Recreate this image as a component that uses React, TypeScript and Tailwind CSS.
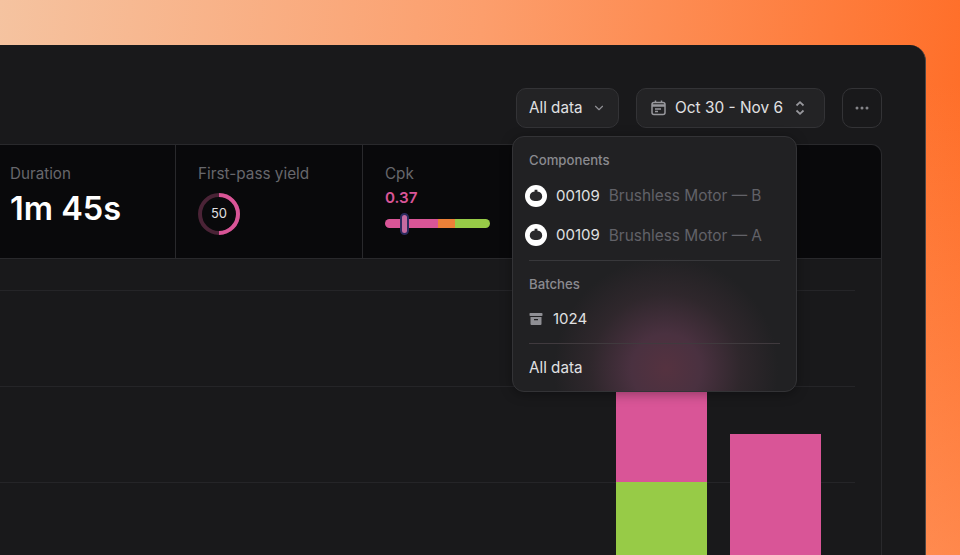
import { ChevronDown } from 'lucide-react'

const gridLines = [31, 127, 223]

function ComponentRow({ code, name }: { code: string; name: string }) {
  return (
    <div className="flex h-[39.5px] items-center pl-[12px]">
      <div className="flex h-[22px] w-[22px] items-center justify-center rounded-full bg-white">
        <svg width="14" height="14" viewBox="0 0 14 14">
          <path d="M5.6 0.8 H8.4 V2.6 C11.4 3 13.2 4.8 13.2 7.4 C13.2 10.4 10.4 12 7 12 C3.6 12 0.8 10.4 0.8 7.4 C0.8 4.8 2.6 3 5.6 2.6 Z" fill="#29292c" />
        </svg>
      </div>
      <span className="ml-[9px] text-[15px] text-[#e0e0e2]">{code}</span>
      <span className="ml-[9px] text-[15.4px] text-[#626268]">{name}</span>
    </div>
  )
}

function Dropdown() {
  return (
    <div className="absolute left-[512px] top-[136px] z-10 h-[256px] w-[285px] rounded-[12px] border border-[#333336] bg-[#212123] bg-[radial-gradient(circle_at_153px_232px,#553240_0%,#4a3140_35px,#2f272c_75px,#212123_112px)] shadow-[0_2px_12px_rgba(0,0,0,0.35)]">
      <div className="px-[16px] pb-[8px] pt-[15px] text-[13.2px] font-medium leading-[16px] text-[#8a8a8f]">Components</div>
      <ComponentRow code="00109" name="Brushless Motor — B" />
      <ComponentRow code="00109" name="Brushless Motor — A" />
      <div className="mx-[16px] mt-[5px] h-px bg-[#38383b]" />
      <div className="px-[16px] pb-[9px] pt-[15px] text-[13.2px] font-medium leading-[16px] text-[#8a8a8f]">Batches</div>
      <div className="flex h-[36px] items-center pl-[16px]">
        <svg width="14" height="14" viewBox="0 0 14 14" fill="#8f8f94">
          <rect x="0.5" y="1" width="13" height="3" rx="0.8" />
          <path d="M1.5 5 H12.5 V12 A1 1 0 0 1 11.5 13 H2.5 A1 1 0 0 1 1.5 12 Z M5 7 V8.2 H9 V7 Z" fillRule="evenodd" />
        </svg>
        <span className="ml-[10px] text-[15px] text-[#e0e0e2]">1024</span>
      </div>
      <div className="mx-[16px] mt-[6px] h-px bg-[#403a3e]" />
      <div className="px-[16px] pt-[15px] text-[15.2px] leading-[18px] text-[#e0e0e2]">All data</div>
    </div>
  )
}

function Toolbar() {
  return (
    <div className="flex h-[99px] items-start justify-end gap-[17px] pr-[43px] pt-[43px]">
      <button className="flex h-[40px] w-[103px] items-center justify-between rounded-[10px] border border-[#333336] bg-[#232325] pl-[12px] pr-[12px] text-[15.2px] text-[#e0e0e2]">
        All data
        <ChevronDown size={14} strokeWidth={2} className="text-[#8f8f94]" />
      </button>
      <button className="flex h-[40px] w-[189px] items-center rounded-[10px] border border-[#333336] bg-[#232325] pl-[14px] text-[15.4px] text-[#e0e0e2]">
        <svg width="15" height="16" viewBox="0 0 15 16" fill="none" stroke="#98989d" strokeWidth="1.5">
          <rect x="1" y="2.5" width="13" height="12" rx="2" />
          <path d="M1 5.5 H14" strokeWidth="2.5" />
          <path d="M4.5 0.5 V3 M10.5 0.5 V3" />
          <path d="M4 9 H10 M4 11.5 H7" strokeWidth="1.4" />
        </svg>
        <span className="ml-[9px]">Oct 30 - Nov 6</span>
        <svg width="10" height="16" viewBox="0 0 10 16" fill="none" stroke="#98989d" strokeWidth="1.8" className="ml-[12px]">
          <path d="M1.5 5.5 L5 2.2 L8.5 5.5 M1.5 10.5 L5 13.8 L8.5 10.5" />
        </svg>
      </button>
      <button className="flex h-[40px] w-[40px] items-center justify-center rounded-[10px] border border-[#333336]">
        <svg width="14" height="4" viewBox="0 0 14 4" fill="#85858a">
          <circle cx="2" cy="2" r="1.5" />
          <circle cx="7" cy="2" r="1.5" />
          <circle cx="12" cy="2" r="1.5" />
        </svg>
      </button>
    </div>
  )
}

function Metrics() {
  return (
    <div className="flex h-[114px] rounded-tr-[10px] border-b border-[#29292c] bg-[#09090b]">
      <div className="w-[188px] border-r border-[#29292c] pl-[22px] pt-[20px]">
        <div className="text-[15.2px] leading-[18px] text-[#67676c]">Duration</div>
        <div className="mt-[6px] text-[32.5px] font-semibold leading-[40px] text-white">1m 45s</div>
      </div>
      <div className="w-[187px] border-r border-[#29292c] pl-[22px] pt-[20px]">
        <div className="text-[15.3px] leading-[18px] text-[#67676c]">First-pass yield</div>
        <div className="relative mt-[10px] h-[42px] w-[42px]">
          <svg width="42" height="42" viewBox="0 0 42 42" fill="none" strokeWidth="4">
            <circle cx="21" cy="21" r="19" stroke="#4a2336" />
            <path d="M21 2 A19 19 0 0 1 21 40" stroke="#d95597" />
          </svg>
          <span className="absolute inset-0 flex items-center justify-center text-[13px] text-[#e0e0e2]">50</span>
        </div>
      </div>
      <div className="flex-1 pl-[22px] pt-[20px]">
        <div className="text-[15.2px] leading-[18px] text-[#67676c]">Cpk</div>
        <div className="mt-[6px] text-[15.2px] font-semibold leading-[18px] text-[#d95597]">0.37</div>
        <div className="relative mt-[12px] flex h-[9px] w-[105px] overflow-hidden rounded-full">
          <div className="w-[53px] bg-[#d95597]" />
          <div className="w-[17px] bg-[#ec8038]" />
          <div className="flex-1 bg-[#97cb47]" />
        </div>
        <div className="relative -mt-[15px] ml-[15px] h-[22px] w-[9px] rounded-full border-2 border-[#2a2a5e] bg-[#c46aa0]" />
      </div>
    </div>
  )
}

function Chart() {
  return (
    <div className="relative flex h-[297px] items-end justify-end gap-[23px] pr-[60px]">
      {gridLines.map((top) => (
        <div key={top} className="absolute left-0 right-[26px] h-px bg-[#252528]" style={{ top }} />
      ))}
      <div className="relative flex w-[91px] flex-col">
        <div className="h-[122px] bg-[#d95597]" />
        <div className="h-[74px] bg-[#97cb47]" />
      </div>
      <div className="relative h-[122px] w-[91px] bg-[#d95597]" />
    </div>
  )
}

export default function App() {
  return (
    <div
      className="relative h-[555px] w-[960px] overflow-hidden bg-[linear-gradient(to_bottom,transparent_15%,rgba(255,190,150,0.35)_100%),linear-gradient(95deg,#f5c3a0_0%,#fc9e6c_48%,#ff6b24_100%)] pt-[45px]"
      style={{ fontFamily: 'Inter, sans-serif' }}
    >
      <div className="relative h-[510px] w-[926px] overflow-hidden rounded-tr-[16px] border-r border-[#4e4644] bg-[#19191b]">
        <Toolbar />
        <div className="-ml-[12px] h-[411px] w-[894px] rounded-tr-[10px] border-r border-t border-[#29292c]">
          <Metrics />
          <Chart />
        </div>
      </div>
      <Dropdown />
    </div>
  )
}
